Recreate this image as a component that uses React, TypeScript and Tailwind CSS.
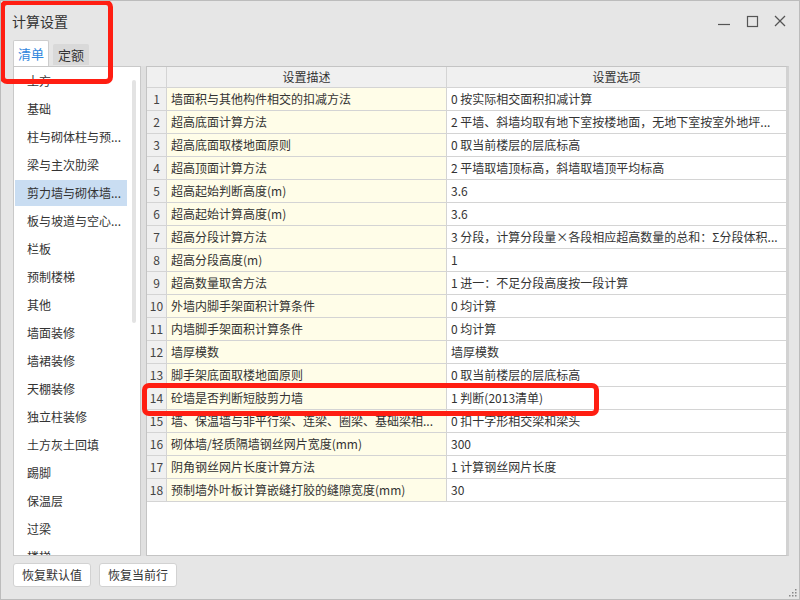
import React from "react";

const items = [
  "土方",
  "基础",
  "柱与砌体柱与预...",
  "梁与主次肋梁",
  "剪力墙与砌体墙...",
  "板与坡道与空心...",
  "栏板",
  "预制楼梯",
  "其他",
  "墙面装修",
  "墙裙装修",
  "天棚装修",
  "独立柱装修",
  "土方灰土回填",
  "踢脚",
  "保温层",
  "过梁",
  "楼梯",
];

const rows: [string, string][] = [
  ["墙面积与其他构件相交的扣减方法", "0 按实际相交面积扣减计算"],
  ["超高底面计算方法", "2 平墙、斜墙均取有地下室按楼地面，无地下室按室外地坪..."],
  ["超高底面取楼地面原则", "0 取当前楼层的层底标高"],
  ["超高顶面计算方法", "2 平墙取墙顶标高，斜墙取墙顶平均标高"],
  ["超高起始判断高度(m)", "3.6"],
  ["超高起始计算高度(m)", "3.6"],
  ["超高分段计算方法", "3 分段，计算分段量×各段相应超高数量的总和：Σ分段体积..."],
  ["超高分段高度(m)", "1"],
  ["超高数量取舍方法", "1 进一：不足分段高度按一段计算"],
  ["外墙内脚手架面积计算条件", "0 均计算"],
  ["内墙脚手架面积计算条件", "0 均计算"],
  ["墙厚模数", "墙厚模数"],
  ["脚手架底面取楼地面原则", "0 取当前楼层的层底标高"],
  ["砼墙是否判断短肢剪力墙", "1 判断(2013清单)"],
  ["墙、保温墙与非平行梁、连梁、圈梁、基础梁相...", "0 扣十字形相交梁和梁头"],
  ["砌体墙/轻质隔墙钢丝网片宽度(mm)", "300"],
  ["阴角钢丝网片长度计算方法", "1 计算钢丝网片长度"],
  ["预制墙外叶板计算嵌缝打胶的缝隙宽度(mm)", "30"],
];

export default function App() {
  return (
    <div className="relative w-[800px] h-[600px] overflow-hidden border border-[#bcbcbc] bg-[#e6e6e6] flex flex-col font-['Noto_Sans_CJK_SC',sans-serif] text-[#333]">
      {/* Title bar */}
      <div className="h-[39px] flex items-center justify-between pl-[11px] pr-[12px] shrink-0">
        <span className="text-[14px] leading-none mt-[1px]">计算设置</span>
        <div className="flex items-center gap-[14px] text-[#555]">
          <svg width="14" height="14" viewBox="0 0 14 14">
            <line x1="1" y1="10.5" x2="13" y2="10.5" stroke="#555" strokeWidth="1.2" />
          </svg>
          <svg width="14" height="14" viewBox="0 0 14 14">
            <rect x="2.5" y="2.5" width="10" height="10" fill="none" stroke="#555" strokeWidth="1.2" />
          </svg>
          <svg width="14" height="14" viewBox="0 0 14 14">
            <line x1="2" y1="2" x2="12" y2="12" stroke="#555" strokeWidth="1.2" />
            <line x1="12" y1="2" x2="2" y2="12" stroke="#555" strokeWidth="1.2" />
          </svg>
        </div>
      </div>

      {/* Tabs */}
      <div className="h-[26px] flex items-end pl-[12px] shrink-0">
        <div className="h-[26px] w-[36px] bg-white border border-b-0 border-[#cdcdcd] rounded-t-[2px] flex items-center justify-center text-[13px] text-[#2f86dd] leading-none">
          清单
        </div>
        <div className="ml-[4px] mb-[1px] h-[21px] w-[36px] bg-[#d9d9d9] rounded-t-[2px] flex items-center justify-center text-[13px] text-[#333] leading-none">
          定额
        </div>
      </div>

      {/* Main */}
      <div className="h-[490px] flex pl-[12px] pr-[10px] shrink-0">
        {/* Left list */}
        <div className="w-[128px] h-full bg-white border border-[#c9c9c9] flex overflow-hidden">
          <div className="w-[113px] h-full overflow-hidden">
            {items.map((t, i) => (
              <div key={i} className="h-[28px] py-[1px] pl-[1px]">
                <div
                  className={
                    "h-full flex items-center pl-[12px] text-[12px] leading-none whitespace-nowrap overflow-hidden " +
                    (i === 4 ? "bg-[#c9ddf2]" : "")
                  }
                >
                  {t}
                </div>
              </div>
            ))}
          </div>
          <div className="flex-1 h-full pl-[5px]">
            <div className="mt-[13px] w-[4px] h-[243px] rounded-[2px] bg-[#e3e3e3]" />
          </div>
        </div>

        <div className="w-[5px] h-full bg-[#e0e0e0]" />

        {/* Table */}
        <div className="flex-1 h-full bg-white border-t border-l border-b border-[#c4c4c4] border-r-[3px] border-r-[#d2d2d2] flex flex-col overflow-hidden">
          <div className="h-[21px] flex bg-[#f0f0f0] border-b border-[#d4d4d4] text-[12px] leading-none shrink-0">
            <div className="w-[20px] h-full border-r border-[#d4d4d4]" />
            <div className="w-[280px] h-full border-r border-[#d4d4d4] flex items-center justify-center">设置描述</div>
            <div className="flex-1 h-full flex items-center justify-center">设置选项</div>
          </div>
          {rows.map(([d, o], i) => (
            <div key={i} className="h-[23px] flex border-b border-[#d4d4d4] text-[12px] leading-none shrink-0">
              <div className="w-[20px] h-full border-r border-[#d4d4d4] bg-[#f0f0f0] flex items-center justify-center text-[#444]">
                {i + 1}
              </div>
              <div className="w-[280px] h-full border-r border-[#d4d4d4] bg-[#fffde8] flex items-center pl-[4px] whitespace-nowrap overflow-hidden">
                {d}
              </div>
              <div className="flex-1 h-full flex items-center pl-[4px] whitespace-nowrap overflow-hidden">{o}</div>
            </div>
          ))}
        </div>
      </div>

      {/* Buttons */}
      <div className="mt-[7px] flex pl-[12px] gap-[8px]">
        <button className="h-[24px] w-[78px] bg-white border border-[#d2d2d2] rounded-[3px] text-[12px] leading-none text-[#333]">
          恢复默认值
        </button>
        <button className="h-[24px] w-[78px] bg-white border border-[#d2d2d2] rounded-[3px] text-[12px] leading-none text-[#333]">
          恢复当前行
        </button>
      </div>

      {/* Resize grip */}
      <svg className="absolute right-[2px] bottom-[2px]" width="8" height="8" viewBox="0 0 8 8">
        <rect x="6" y="0" width="1.5" height="1.5" fill="#888" />
        <rect x="3" y="3" width="1.5" height="1.5" fill="#888" />
        <rect x="6" y="3" width="1.5" height="1.5" fill="#888" />
        <rect x="0" y="6" width="1.5" height="1.5" fill="#888" />
        <rect x="3" y="6" width="1.5" height="1.5" fill="#888" />
        <rect x="6" y="6" width="1.5" height="1.5" fill="#888" />
      </svg>

      {/* Red annotation boxes */}
      <div className="absolute left-[-1px] top-[-1px] w-[113px] h-[84px] border-[5px] border-[#ff1e12] rounded-[7px] pointer-events-none" />
      <div className="absolute left-[141px] top-[382px] w-[457px] h-[33px] border-[5px] border-[#ff1e12] rounded-[7px] pointer-events-none" />
    </div>
  );
}
